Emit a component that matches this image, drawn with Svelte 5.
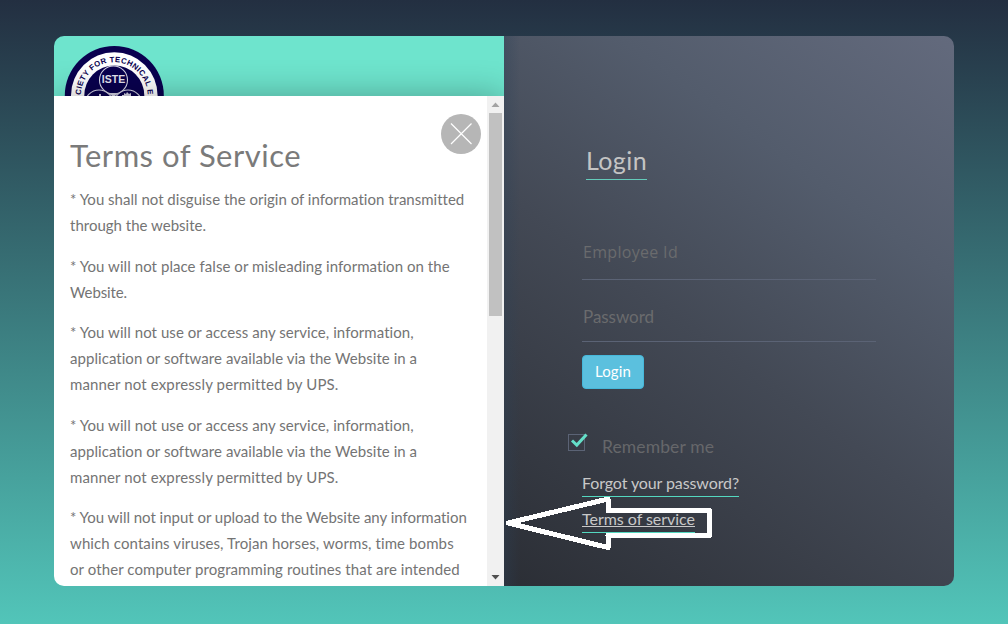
<script>
  const terms = [
    [['* You shall not disguise the origin of information transmitted', 394], ['through the website.', 136]],
    [['* You will not place false or misleading information on the', 380], ['Website.', 57]],
    [['* You will not use or access any service, information,', 344], ['application or software available via the Website in a', 347], ['manner not expressly permitted by UPS.', 268]],
    [['* You will not use or access any service, information,', 344], ['application or software available via the Website in a', 347], ['manner not expressly permitted by UPS.', 268]],
    [['* You will not input or upload to the Website any information', 397], ['which contains viruses, Trojan horses, worms, time bombs', 384], ['or other computer programming routines that are intended', 390]]
  ];

  // Tracks a line of text out or in until it measures the given width.
  function fit(node, width) {
    const natural = node.getBoundingClientRect().width;
    const gap = (width - natural) / node.textContent.length;
    node.style.letterSpacing = `${gap}px`;
  }
</script>

<main class="page">
  <div class="card">
    <section class="left">
      <header class="banner">
        <svg class="logo" width="100" height="52" viewBox="0 0 100 52">
          <defs><path id="ring" d="M 17 50.500 A 33.300 33.300 0 0 1 83.600 50.500" /></defs>
          <circle cx="50.300" cy="50.500" r="49.500" fill="#09004f" />
          <circle cx="50.300" cy="50.500" r="43.300" fill="#fff" />
          <circle cx="50.300" cy="50.500" r="30" fill="#09004f" />
          <g fill="none" stroke="#d6d5e6" stroke-width="1.1">
            <circle cx="49.500" cy="35" r="14" fill="#09004f" />
            <circle cx="35" cy="59" r="14" />
            <circle cx="64" cy="59" r="14" />
          </g>
          <path d="M44 48l5.500 4 5.500-4zM35 52v-3h2v3zM58 52v-2h2v-2l2 1 1-2 2 2 2-1v4z" fill="#d6d5e6" />
          <text x="49.500" y="38" text-anchor="middle" class="iste">ISTE</text>
          <text class="ringtext" fill="#09004f"><textPath href="#ring" startOffset="0.5" textLength="103">CIETY FOR TECHNICAL E</textPath></text>
        </svg>
      </header>
      <div class="dialog">
        <article class="terms">
          <h1><span use:fit={231}>Terms of Service</span></h1>
          {#each terms as lines}
            <p>
              {#each lines as [text, width]}
                <span class="line"><span use:fit={width}>{text}</span></span>
              {/each}
            </p>
          {/each}
          <button class="close" aria-label="Close">
            <svg width="40" height="40" viewBox="0 0 40 40"><path d="M10 9.500L30.500 30M30.500 9.500L10 30" stroke="#fff" stroke-width="1.2" /></svg>
          </button>
        </article>
        <div class="scrollbar">
          <svg width="17" height="17"><path d="M4.500 11L8.500 6.500L12.500 11z" fill="#a3a3a3" /></svg>
          <div class="thumb"></div>
          <svg class="down" width="17" height="17"><path d="M4.500 6L12.500 6L8.500 10.500z" fill="#505050" /></svg>
        </div>
      </div>
    </section>
    <section class="right">
      <h2><span use:fit={61}>Login</span></h2>
      <div class="field employee"><span use:fit={95}>Employee Id</span></div>
      <div class="field password"><span use:fit={71}>Password</span></div>
      <button class="login"><span use:fit={36}>Login</span></button>
      <div class="remember">
        <svg width="21" height="19" viewBox="0 0 21 19">
          <rect x=".5" y="1.500" width="16" height="16" fill="none" stroke="#5b6375" />
          <path d="M4 7.500L8.800 12L18.500 1.500" fill="none" stroke="#64dfc8" stroke-width="3" />
        </svg>
        <span use:fit={112}>Remember me</span>
      </div>
      <a class="forgot" href="#forgot"><span use:fit={157}>Forgot your password?</span></a>
      <a class="tos" href="#terms"><span use:fit={113}>Terms of service</span></a>
    </section>
    <svg class="arrow" width="214" height="60" viewBox="0 0 214 60">
      <path d="M6 28L106 4V15.500H207.500V40.500H106V52.500Z" fill="none" stroke="#fff" stroke-width="5" shape-rendering="crispEdges" stroke-linejoin="round" />
    </svg>
  </div>
</main>

<style>
  :global(body) { margin: 0; }
  .page {
    box-sizing: border-box;
    width: 1008px;
    height: 624px;
    padding: 36px 54px 38px;
    background: linear-gradient(#232f41, #52c5b9);
    font-family: Lato, "Open Sans", sans-serif;
    overflow: hidden;
  }
  .card { position: relative; display: flex; height: 550px; }
  .left {
    width: 450px;
    display: flex;
    flex-direction: column;
    border-radius: 10px 0 0 10px;
    overflow: hidden;
    background: #6ee4cd;
  }
  .banner { height: 60px; box-sizing: border-box; padding: 9px 0 0 10px; overflow: hidden; }
  .logo { display: block; }
  .iste { font: bold 10.5px "Liberation Sans", sans-serif; fill: #e4e3ef; }
  .ringtext { font: bold 7.8px "Liberation Sans", sans-serif; }
  .dialog { display: flex; height: 490px; background: #fff; box-shadow: 0 0 32px rgba(0, 0, 0, .3); }
  .terms { position: relative; box-sizing: border-box; width: 433px; padding: 39px 16px 0; color: #747474; overflow: hidden; }
  h1 { margin: 0 0 11px; font-size: 31px; font-weight: 400; line-height: 40px; color: #7a7a7a; white-space: nowrap; }
  p { margin: 0 0 14.6px; font-size: 15px; line-height: 26px; white-space: nowrap; }
  .line { display: block; }
  .close { position: absolute; right: 6px; top: 18px; width: 40px; height: 40px; padding: 0; border: 0; border-radius: 50%; background: #b6b6b6; }
  .close svg { display: block; }
  .scrollbar { display: flex; flex-direction: column; width: 17px; background: #f1f1f1; }
  .scrollbar svg { display: block; }
  .thumb { height: 203px; margin: 0 2px; background: #c1c1c1; }
  .down { margin-top: auto; }
  .right {
    box-sizing: border-box;
    width: 450px;
    padding: 105px 78px 0;
    display: flex;
    flex-direction: column;
    align-items: flex-start;
    border-radius: 0 10px 10px 0;
    background:
      linear-gradient(90deg, rgba(45, 66, 88, .35), transparent 16px),
      linear-gradient(36deg, #2b2e35, #434955 45%, #535c6c 72%, #636a7d);
    color: #d0d0d0;
    white-space: nowrap;
  }
  h2 { margin: 0 0 0 4px; height: 38px; border-bottom: 1px solid #64cbbb; font-size: 25px; font-weight: 400; line-height: 38px; color: #c4c4c4; }
  .field { box-sizing: border-box; width: 294px; padding-left: 1px; border-bottom: 1px solid #5b6375; color: #6a6b6d; font-size: 17px; }
  .employee { margin-top: 52px; height: 48px; font-family: "Open Sans", sans-serif; font-size: 16px; line-height: 40px; }
  .password { height: 62px; line-height: 73px; }
  .login { box-sizing: border-box; width: 62px; height: 34px; margin-top: 13px; padding: 0 0 2px; border: 1px solid #46b8da; border-radius: 4px; background: #5bc0de; color: #fff; font: 15px/30px Lato, sans-serif; }
  .remember { display: flex; gap: 13px; height: 26px; margin: 44px 0 0 -14px; color: #66676a; font-size: 17.5px; line-height: 27px; }
  .forgot, .tos { display: block; font-size: 16px; color: #c8c8c8; text-decoration: none; border-bottom: 1px solid #54d8c0; }
  .forgot { margin-top: 13px; height: 24px; line-height: 21px; }
  .tos { margin-top: 12px; height: 23px; line-height: 20px; text-decoration: underline; }
  .arrow { position: absolute; left: 448px; top: 459px; pointer-events: none; }
</style>
